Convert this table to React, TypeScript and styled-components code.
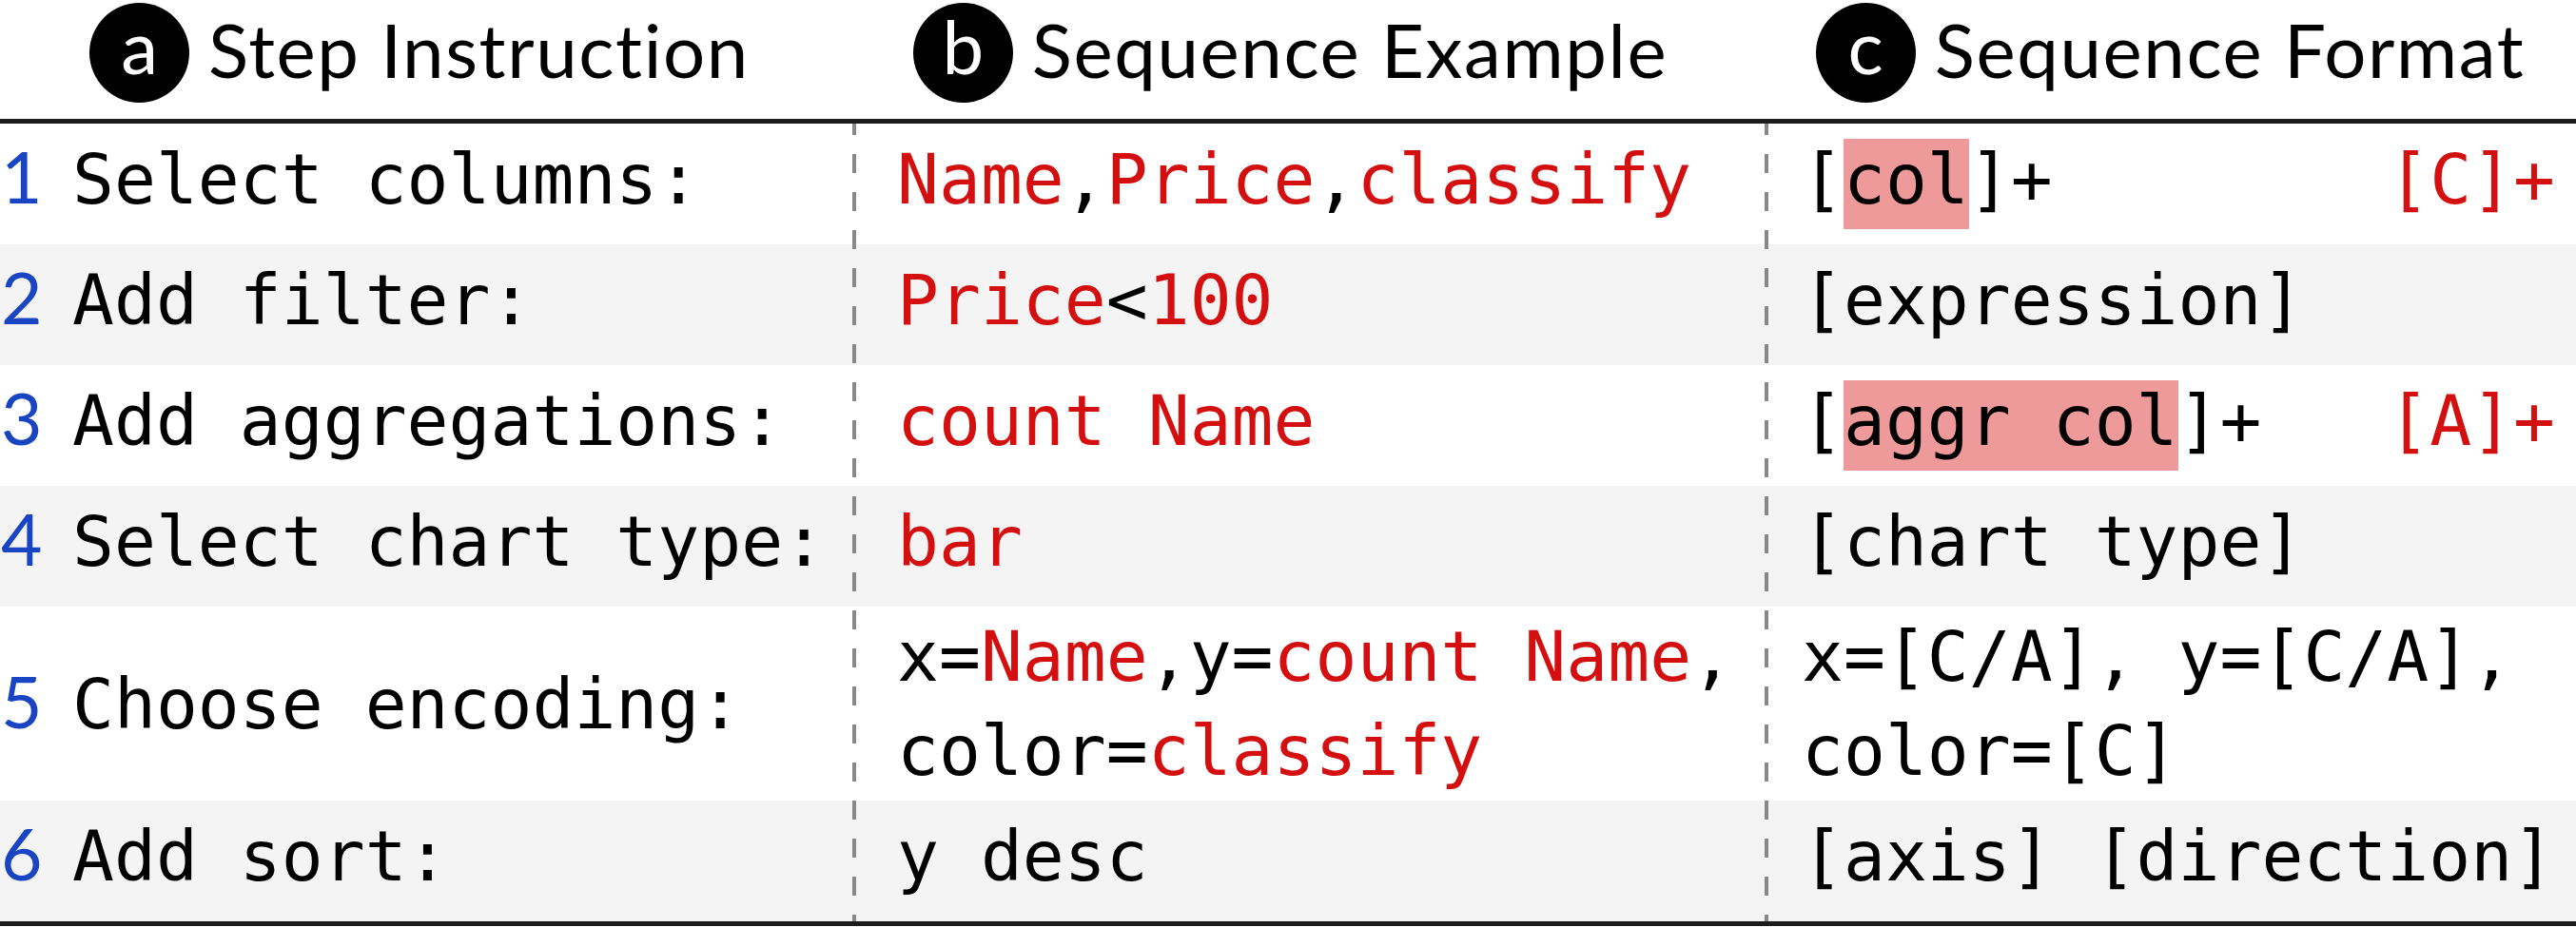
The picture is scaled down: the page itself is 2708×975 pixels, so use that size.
import styled, { createGlobalStyle } from "styled-components";

const COLUMNS = "896px 4px 955px 4px 1fr";
const RED = "#d40f0f";
const BLUE = "#1a45c2";

const GlobalStyle = createGlobalStyle`
  html, body {
    margin: 0;
    padding: 0;
    background: #ffffff;
  }
`;

const S = {
  Table: styled.div`
    width: 2708px;
    background: #ffffff;
    color: #000000;
  `,

  Header: styled.div`
    display: grid;
    grid-template-columns: 896px 959px 1fr;
    height: 125px;
    border-bottom: 5px solid #1c1c1c;
  `,

  HeaderCell: styled.div<{ $shift: number }>`
    display: flex;
    justify-content: center;
    align-items: flex-start;
    gap: 20px;
    padding-right: ${(p) => p.$shift}px;
  `,

  Badge: styled.div`
    display: flex;
    justify-content: center;
    width: 105px;
    height: 105px;
    margin-top: 3px;
    border-radius: 50%;
    background: #000000;
    color: #ffffff;
    font-family: Lato, "Open Sans", sans-serif;
    font-size: 78px;
    line-height: 90px;
  `,

  HeaderTitle: styled.div`
    font-family: Lato, "Open Sans", sans-serif;
    font-size: 78px;
    letter-spacing: 1.6px;
    line-height: 105px;
    white-space: nowrap;
  `,

  Body: styled.div`
    display: grid;
    grid-template-columns: ${COLUMNS};
    border-bottom: 5px solid #1c1c1c;
  `,

  Row: styled.div<{ $index: number; $tall: boolean }>`
    grid-column: 1 / -1;
    grid-row: ${(p) => p.$index + 1};
    display: grid;
    grid-template-columns: ${COLUMNS};
    align-items: center;
    box-sizing: border-box;
    min-height: 127px;
    padding: ${(p) => (p.$tall ? "3px 0" : "0 0 10px")};
    background: ${(p) => (p.$index % 2 === 1 ? "#f4f4f4" : "#ffffff")};
    font-family: "DejaVu Sans Mono", "Liberation Mono", monospace;
    font-size: 73px;
    line-height: 99px;
    white-space: pre;
  `,

  StepCell: styled.div`
    grid-column: 1;
  `,

  StepNumber: styled.span`
    display: inline-block;
    width: 76px;
    padding-left: 1px;
    box-sizing: border-box;
    font-family: Lato, "Open Sans", sans-serif;
    font-size: 75px;
    line-height: 1;
    color: ${BLUE};
  `,

  ExampleCell: styled.div`
    grid-column: 3;
    padding-left: 43px;
  `,

  FormatCell: styled.div`
    grid-column: 5;
    display: flex;
    justify-content: space-between;
    align-items: baseline;
    padding: 0 22px 0 35px;
  `,

  Red: styled.span`
    color: ${RED};
  `,

  Mark: styled.span`
    background: #ee9a9a;
    padding-bottom: 10px;
  `,

  Divider: styled.div<{ $col: number }>`
    grid-column: ${(p) => p.$col};
    grid-row: 1 / span 6;
    z-index: 1;
    background: repeating-linear-gradient(
      to bottom,
      #888888 0 12px,
      transparent 12px 32px,
      #888888 32px 40px
    );
  `,
};

interface StepRow {
  step: string;
  example: React.ReactNode;
  format: React.ReactNode;
  formatTag?: string;
  tall?: boolean;
}

const rows: StepRow[] = [
  {
    step: "Select columns:",
    example: (
      <>
        <S.Red>Name</S.Red>,<S.Red>Price</S.Red>,<S.Red>classify</S.Red>
      </>
    ),
    format: (
      <>
        [<S.Mark>col</S.Mark>]+
      </>
    ),
    formatTag: "[C]+",
  },
  {
    step: "Add filter:",
    example: (
      <>
        <S.Red>Price</S.Red>&lt;<S.Red>100</S.Red>
      </>
    ),
    format: "[expression]",
  },
  {
    step: "Add aggregations:",
    example: <S.Red>count Name</S.Red>,
    format: (
      <>
        [<S.Mark>aggr col</S.Mark>]+
      </>
    ),
    formatTag: "[A]+",
  },
  {
    step: "Select chart type:",
    example: <S.Red>bar</S.Red>,
    format: "[chart type]",
  },
  {
    step: "Choose encoding:",
    example: (
      <>
        x=<S.Red>Name</S.Red>,y=<S.Red>count Name</S.Red>,
        <br />
        color=<S.Red>classify</S.Red>
      </>
    ),
    format: (
      <>
        x=[C/A], y=[C/A],
        <br />
        color=[C]
      </>
    ),
    tall: true,
  },
  {
    step: "Add sort:",
    example: "y desc",
    format: "[axis] [direction]",
  },
];

const headers = [
  { badge: "a", title: "Step Instruction", shift: 14 },
  { badge: "b", title: "Sequence Example", shift: 38 },
  { badge: "c", title: "Sequence Format", shift: 0 },
];

const App = () => {
  return (
    <>
      <GlobalStyle />
      <S.Table>
        <S.Header>
          {headers.map((h) => (
            <S.HeaderCell key={h.badge} $shift={h.shift}>
              <S.Badge>{h.badge}</S.Badge>
              <S.HeaderTitle>{h.title}</S.HeaderTitle>
            </S.HeaderCell>
          ))}
        </S.Header>

        <S.Body>
          {rows.map((row, i) => (
            <S.Row key={row.step} $index={i} $tall={!!row.tall}>
              <S.StepCell>
                <S.StepNumber>{i + 1}</S.StepNumber>
                {row.step}
              </S.StepCell>
              <S.ExampleCell>{row.example}</S.ExampleCell>
              <S.FormatCell>
                <span>{row.format}</span>
                {row.formatTag && <S.Red>{row.formatTag}</S.Red>}
              </S.FormatCell>
            </S.Row>
          ))}
          <S.Divider $col={2} />
          <S.Divider $col={4} />
        </S.Body>
      </S.Table>
    </>
  );
};

export default App;
